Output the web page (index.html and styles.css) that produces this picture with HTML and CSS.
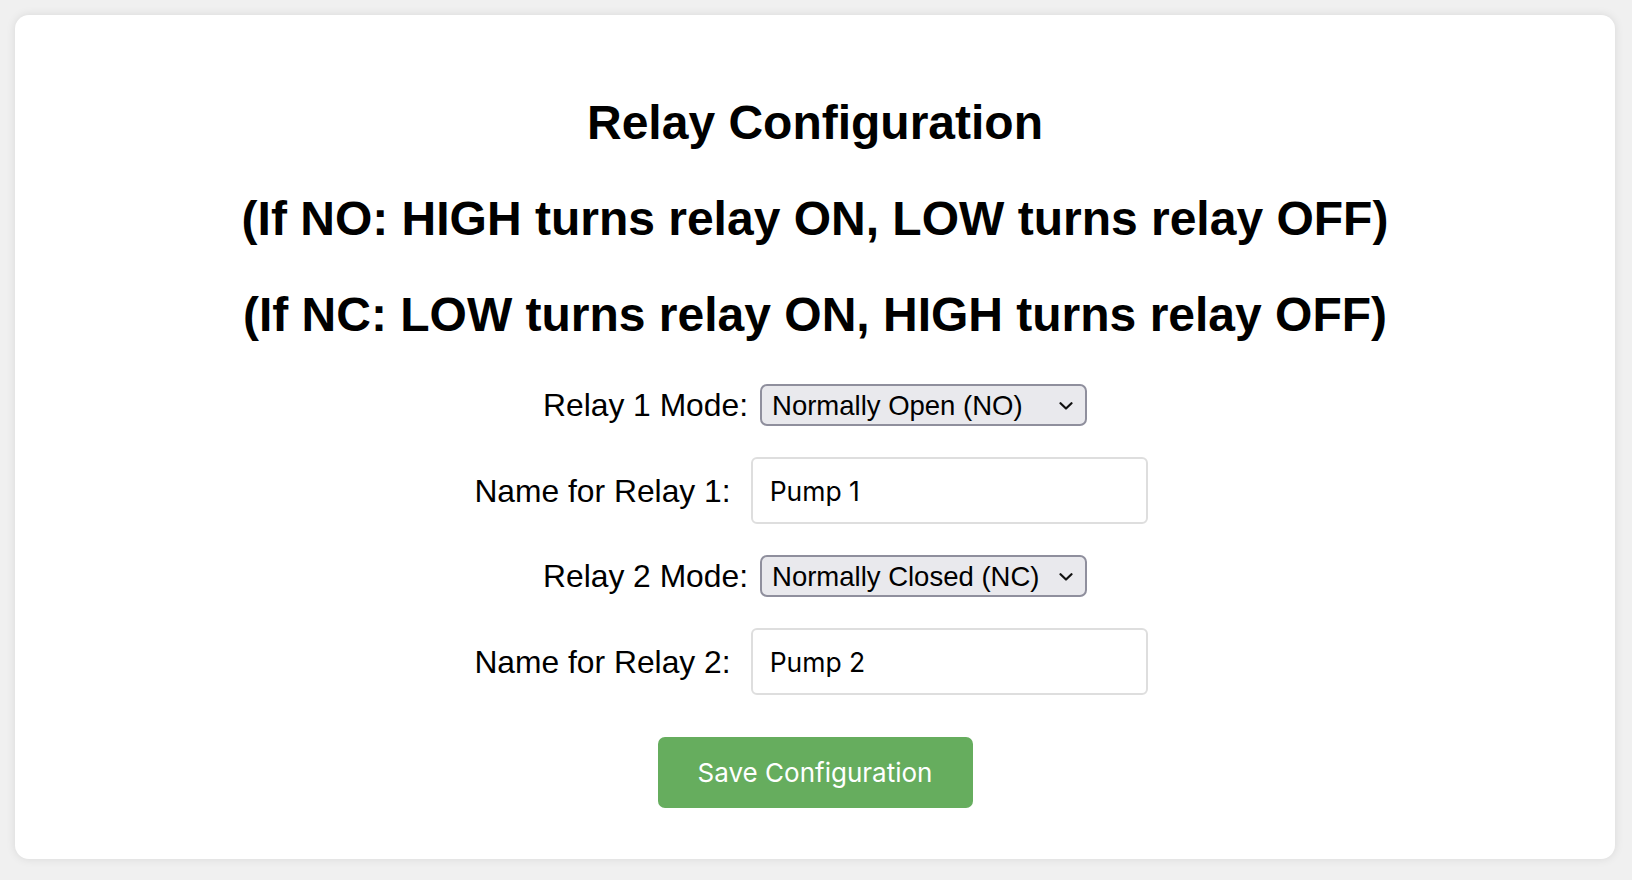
FILE: index.html
```html
<!DOCTYPE html>
<html lang="en">
<head>
<meta charset="utf-8">
<title>Relay Configuration</title>
<link rel="stylesheet" href="styles.css">
</head>
<body>
<div class="card">
  <h2 class="heading">Relay Configuration</h2>
  <h2 class="heading">(If NO: HIGH turns relay ON, LOW turns relay OFF)</h2>
  <h2 class="heading">(If NC: LOW turns relay ON, HIGH turns relay OFF)</h2>
  <form class="form">
    <div class="row">
      <label class="label" for="r1mode">Relay 1 Mode:</label>
      <span class="select-wrap">
        <select id="r1mode" class="select">
          <option selected>Normally Open (NO)</option>
          <option>Normally Closed (NC)</option>
        </select>
        <svg class="chevron" width="14" height="8" viewBox="0 0 14 8"><path d="M1.5 1.2 L7 6.5 L12.5 1.2" fill="none" stroke="#111" stroke-width="2.2" stroke-linecap="round" stroke-linejoin="round"/></svg>
      </span>
    </div>
    <div class="row">
      <label class="label" for="r1name">Name for Relay 1:</label>
      <input id="r1name" class="text-input" type="text" value="Pump 1">
    </div>
    <div class="row">
      <label class="label" for="r2mode">Relay 2 Mode:</label>
      <span class="select-wrap">
        <select id="r2mode" class="select">
          <option>Normally Open (NO)</option>
          <option selected>Normally Closed (NC)</option>
        </select>
        <svg class="chevron" width="14" height="8" viewBox="0 0 14 8"><path d="M1.5 1.2 L7 6.5 L12.5 1.2" fill="none" stroke="#111" stroke-width="2.2" stroke-linecap="round" stroke-linejoin="round"/></svg>
      </span>
    </div>
    <div class="row">
      <label class="label" for="r2name">Name for Relay 2:</label>
      <input id="r2name" class="text-input" type="text" value="Pump 2">
    </div>
    <button type="button" class="save-btn">Save Configuration</button>
  </form>
</div>
</body>
</html>
```

FILE: styles.css
```css
html, body {
  margin: 0;
  padding: 0;
}

body {
  background: #f0f0f0;
  font-family: "Liberation Sans", Arial, sans-serif;
  color: #000;
  padding: 15px 17px 15px 15px;
}

.card {
  background: #fff;
  border-radius: 14px;
  box-shadow: 0 0 10px rgba(0, 0, 0, 0.1);
  padding: 40px 40px 51px;
  text-align: center;
}

.heading {
  font-size: 48px;
  line-height: 54px;
  font-weight: bold;
  margin: 42px 0;
}

.card .heading:first-child {
  margin-top: 41px;
}

.form {
  display: flex;
  flex-direction: column;
  align-items: center;
  gap: 31px;
}

.row {
  display: flex;
  align-items: center;
  justify-content: center;
}

.label {
  font-size: 31.8px;
  line-height: 36px;
  margin-right: 12px;
}

.select-wrap {
  position: relative;
  display: inline-flex;
}

.select {
  appearance: none;
  -webkit-appearance: none;
  width: 327px;
  height: 42px;
  box-sizing: border-box;
  background: #e9e9ed;
  border: 2px solid #8f8f9d;
  border-radius: 7px;
  font-family: "Liberation Sans", Arial, sans-serif;
  font-size: 27.5px;
  color: #000;
  padding: 0 30px 0 10px;
  margin: 0;
}

.chevron {
  position: absolute;
  right: 14px;
  top: 18px;
  pointer-events: none;
}

.text-input {
  width: 397px;
  height: 67px;
  box-sizing: border-box;
  border: 2px solid #dedede;
  border-radius: 6px;
  padding: 0 17px;
  margin: 0 8px;
  font-family: Inter, "Noto Sans", sans-serif;
  font-size: 26.5px;
  color: #000;
  background: #fff;
  outline: none;
}

.save-btn {
  margin-top: 11px;
  width: 315px;
  height: 71px;
  border: none;
  border-radius: 7px;
  background: #66ad5e;
  color: #fff;
  font-family: Inter, "Noto Sans", sans-serif;
  font-size: 26px;
  cursor: pointer;
}
```
